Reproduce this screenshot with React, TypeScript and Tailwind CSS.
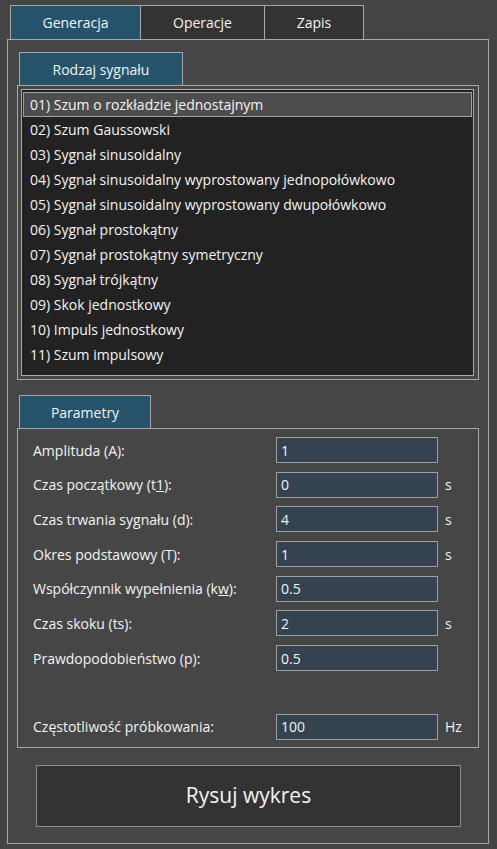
import React from 'react'

const signals = [
  '01) Szum o rozkładzie jednostajnym',
  '02) Szum Gaussowski',
  '03) Sygnał sinusoidalny',
  '04) Sygnał sinusoidalny wyprostowany jednopołówkowo',
  '05) Sygnał sinusoidalny wyprostowany dwupołówkowo',
  '06) Sygnał prostokątny',
  '07) Sygnał prostokątny symetryczny',
  '08) Sygnał trójkątny',
  '09) Skok jednostkowy',
  '10) Impuls jednostkowy',
  '11) Szum impulsowy',
]

type Param = { label: React.ReactNode; value: string; unit?: string; gapBefore?: boolean }

const params: Param[] = [
  { label: 'Amplituda (A):', value: '1' },
  { label: <>Czas początkowy (t<span className="underline">1</span>):</>, value: '0', unit: 's' },
  { label: 'Czas trwania sygnału (d):', value: '4', unit: 's' },
  { label: 'Okres podstawowy (T):', value: '1', unit: 's' },
  { label: <>Współczynnik wypełnienia (k<span className="underline">w</span>):</>, value: '0.5' },
  { label: 'Czas skoku (ts):', value: '2', unit: 's' },
  { label: 'Prawdopodobieństwo (p):', value: '0.5' },
  { label: 'Częstotliwość próbkowania:', value: '100', unit: 'Hz', gapBefore: true },
]

function TopTab({ label, active, width }: { label: string; active?: boolean; width: string }) {
  return (
    <div
      className={`${width} h-[34px] flex items-center justify-center border border-b-0 border-[#a8a8a8] text-[14px] ${
        active ? 'bg-[#25536b]' : 'bg-[#333333]'
      } -ml-px first:ml-0`}
    >
      {label}
    </div>
  )
}

export default function App() {
  return (
    <div
      className="w-[497px] h-[849px] bg-[#444444] text-[#f4f4f4] pt-[5px] overflow-hidden"
      style={{ fontFamily: '"Open Sans", "Noto Sans", sans-serif' }}
    >
      {/* Top tabs */}
      <div className="flex ml-[10px]">
        <TopTab label="Generacja" active width="w-[131px]" />
        <TopTab label="Operacje" width="w-[125px]" />
        <TopTab label="Zapis" width="w-[100px]" />
      </div>

      {/* Main panel */}
      <div className="ml-[7px] w-[482px] h-[805px] border border-[#a8a8a8] bg-[#464646] pt-[12px] pl-[9px]">
        {/* Rodzaj sygnału */}
        <div className="ml-[2px] w-[164px] h-[33px] bg-[#25536b] border border-b-0 border-[#a8a8a8] flex items-center justify-center text-[14px]">
          Rodzaj sygnału
        </div>
        <div className="w-[462px] border border-[#a8a8a8] p-[3px] pr-[4px]">
          <div className="bg-[#222222] border border-[#a8a8a8] pt-[2px] pb-[8px] px-[1px]">
            {signals.map((s, i) => (
              <div
                key={s}
                className={`h-[25px] flex items-center pl-[6px] text-[14px] ${
                  i === 0 ? 'bg-[#4d4d4d] border border-[#a0a0a0]' : 'border border-transparent'
                }`}
              >
                {s}
              </div>
            ))}
          </div>
        </div>

        {/* Parametry */}
        <div className="mt-[15px] ml-[2px] w-[132px] h-[33px] bg-[#25536b] border border-b-0 border-[#a8a8a8] flex items-center justify-center text-[14px]">
          Parametry
        </div>
        <div className="w-[462px] h-[320px] border border-[#a8a8a8] pt-[8px] pl-[15px] flex flex-col gap-[8.7px]">
          {params.map((p, i) => (
            <div key={i} className={`flex items-center h-[26px] ${p.gapBefore ? 'mt-[34px]' : ''}`}>
              <div className="w-[243px] text-[14px]">{p.label}</div>
              <div className="w-[162px] h-[26px] bg-[#35424f] border border-[#a0a0a0] pl-[4px] text-[14px] flex items-center">
                {p.value}
              </div>
              <div className="ml-[7px] text-[14px]">{p.unit}</div>
            </div>
          ))}
        </div>

        {/* Button */}
        <div className="mt-[17px] ml-[19px] w-[425px] h-[62px] bg-[#333333] border border-[#8c8c8c] flex items-center justify-center text-[21px]">
          Rysuj wykres
        </div>
      </div>
    </div>
  )
}
